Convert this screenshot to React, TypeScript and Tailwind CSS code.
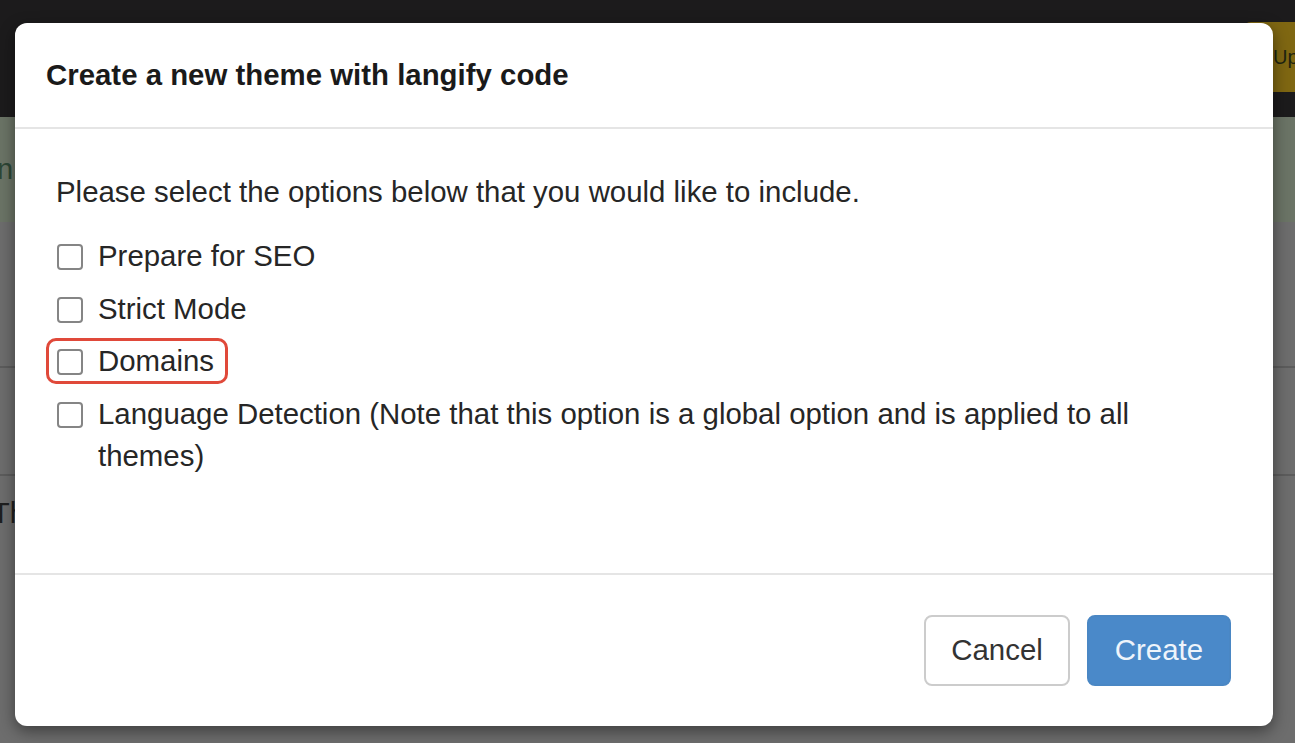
import React from "react";

function Box() {
  return (
    <span className="mt-[9px] h-[26px] w-[26px] shrink-0 rounded-[4px] border-2 border-[#858585] bg-white" />
  );
}

export default function App() {
  const font = "font-['Liberation_Sans',Arial,sans-serif]";
  return (
    <div className={`relative h-[743px] w-[1295px] overflow-hidden bg-[#6d6d6d] ${font}`}>
      {/* page behind the backdrop */}
      <div className="flex h-[117px] items-start overflow-hidden bg-[#1c1b1c] pt-[22px]">
        <div className="ml-[1243px] h-[70px] w-[120px] shrink-0 whitespace-nowrap rounded-l-[8px] bg-[#7f6712] pl-[30px] pt-[3px] text-[20px] leading-[64px] text-[#1e2410]">
          Upgrade
        </div>
      </div>
      <div className="flex h-[105px] items-center overflow-hidden bg-[#6b7466] text-[29px] text-[#2d4635]">
        <span className="-ml-[3px]">n</span>
      </div>
      <div className="h-[146px] border-b-2 border-[#5c5c5c]" />
      <div className="h-[108px] border-b-2 border-[#5c5c5c]" />
      <div className="overflow-hidden pt-[16px] text-[29px] leading-[42px] text-[#1f1f1f]">
        <span className="-ml-[8px]">Th</span>
      </div>

      {/* modal */}
      <div className="absolute left-[15px] top-[23px] w-[1258px] rounded-[12px] bg-white shadow-[0_5px_16px_rgba(0,0,0,0.45)]">
        <div className="h-[106px] border-b-2 border-[#e5e5e5] px-[31px] pt-[31px]">
          <h4 className="text-[29.4px] font-bold leading-[42px] text-[#1a1a1a]">
            Create a new theme with langify code
          </h4>
        </div>
        <div className="h-[444px] px-[41px] pt-[42px] text-[29.4px] leading-[42px] text-[#262626]">
          <p className="mb-[22px]">Please select the options below that you would like to include.</p>
          <div className="flex flex-col gap-[10.5px]">
            <label className="flex items-start gap-[15px] pl-[1px]">
              <Box />
              <span>Prepare for SEO</span>
            </label>
            <label className="flex items-start gap-[15px] pl-[1px]">
              <Box />
              <span>Strict Mode</span>
            </label>
            <label className="relative flex items-start gap-[15px] pl-[1px]">
              <span className="absolute -left-[10px] -top-[2px] h-[46px] w-[182px] rounded-[10px] border-[3px] border-[#e0493a]" />
              <Box />
              <span>Domains</span>
            </label>
            <label className="flex items-start gap-[15px] pl-[1px]">
              <Box />
              <span>
                Language Detection (Note that this option is a global option and is applied to all
                <br />
                themes)
              </span>
            </label>
          </div>
        </div>
        <div className="flex h-[153px] items-center justify-end gap-[17px] border-t-2 border-[#e5e5e5] px-[42px]">
          <button className="h-[71px] rounded-[8px] border-2 border-[#cccccc] bg-white px-[25px] text-[29.4px] text-[#333333]">
            Cancel
          </button>
          <button className="h-[71px] rounded-[8px] border-2 border-[#4a87c4] bg-[#4a89c9] px-[26px] text-[29.4px] text-[#eef4fb]">
            Create
          </button>
        </div>
      </div>
    </div>
  );
}
